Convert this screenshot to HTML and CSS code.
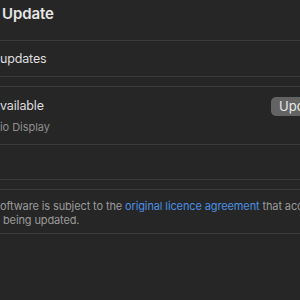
FILE: index.html
```html
<!DOCTYPE html>
<html lang="en">
<head>
<meta charset="utf-8">
<title>Software Update</title>
<link rel="stylesheet" href="styles.css">
</head>
<body>
<div class="window">
  <header class="toolbar">
    <h1 class="title"><span class="pre">Software </span>Update</h1>
  </header>

  <section class="group">
    <div class="row row-single">
      <span class="label"><span class="pre">Automatic </span>updates</span>
    </div>
  </section>

  <section class="group">
    <div class="row row-update">
      <div class="row-head">
        <span class="label head-label"><span class="pre">Updates A</span>vailable</span>
        <button class="btn">Update Now</button>
      </div>
      <div class="sub"><span class="pre">Stud</span>io Display</div>
    </div>
    <div class="row row-empty"></div>
  </section>

  <section class="group note">
    <div class="line"><span class="pre">Use of this s</span>oftware is subject to the <a class="link" href="#">original licence agreement</a> that accompanied</div>
    <div class="line"><span class="pre">the software</span> being updated.</div>
  </section>
</div>
</body>
</html>
```

FILE: styles.css
```css
html, body {
  margin: 0;
  padding: 0;
}

body {
  width: 300px;
  height: 300px;
  overflow: hidden;
  background: #262626;
  font-family: Inter, "Noto Sans", "Liberation Sans", sans-serif;
  color: #dedede;
  -webkit-font-smoothing: antialiased;
}

.window {
  display: flex;
  flex-direction: column;
  white-space: nowrap;
}

.pre {
  display: inline-flex;
  width: 0;
  justify-content: flex-end;
  white-space: pre;
}

.toolbar {
  height: 40px;
  padding-left: 2px;
  box-sizing: border-box;
}

.title {
  margin: 0;
  padding-top: 5px;
  font-size: 15px;
  line-height: 18px;
  font-weight: 600;
  letter-spacing: -0.1px;
  color: #e6e6e6;
}

.group {
  border-top: 1px solid #3a3a3a;
  border-bottom: 1px solid #3a3a3a;
  margin-bottom: 9px;
}

.row {
  font-size: 12.5px;
  letter-spacing: -0.15px;
}

.row-single {
  height: 35px;
  display: flex;
  align-items: center;
  line-height: 16px;
}

.row-update {
  padding: 11px 0 10px;
  border-bottom: 1px solid #3a3a3a;
}

.row-head {
  display: flex;
  align-items: center;
  height: 16px;
  line-height: 16px;
}

.head-label {
  flex: 0 0 271px;
}

.btn {
  flex: none;
  height: 19px;
  padding: 0 8px;
  border: none;
  border-radius: 5px;
  background: #636363;
  color: #e8e8e8;
  font-family: inherit;
  font-size: 13px;
  letter-spacing: 0;
  line-height: 19px;
}

.sub {
  margin-top: 6px;
  font-size: 11px;
  letter-spacing: -0.05px;
  line-height: 14px;
  color: #8e8e8e;
}

.row-empty {
  height: 34px;
}

.note {
  padding: 9px 0 6px;
  font-size: 11px;
  letter-spacing: -0.12px;
  line-height: 14px;
  color: #9a9a9a;
}

.line {
  white-space: pre;
}

.link {
  color: #4b8fe2;
  text-decoration: none;
}
```
